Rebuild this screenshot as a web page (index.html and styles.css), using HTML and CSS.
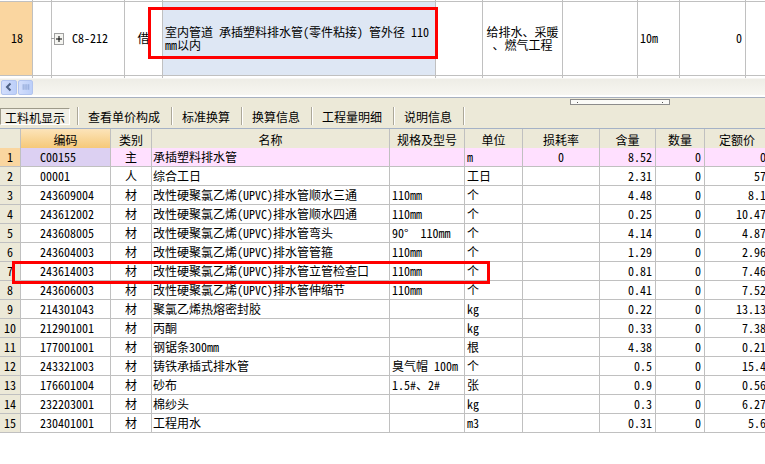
FILE: index.html
```html
<!DOCTYPE html>
<html lang="zh-CN">
<head>
<meta charset="utf-8">
<title>工料机显示</title>
<link rel="stylesheet" href="styles.css">
</head>
<body>
<div class="app">
  <div class="upper">
    <div class="trow">
      <div class="tcol c1"><div class="tcell num">18</div></div>
      <div class="tcol c2"><div class="tcell"></div></div>
      <div class="tcol c3"><div class="tcell code"><span class="tline"></span><svg class="plus" width="10" height="12" viewBox="0 0 10 12"><rect x="0.5" y="0.5" width="9" height="11" fill="#f4f4f0" stroke="#a0a0a0"/><path d="M2 6h6M5 3v6" stroke="#000" stroke-width="1"/></svg><span class="codetext">C8-212</span></div></div>
      <div class="tcol c4"><div class="tcell center">借</div></div>
      <div class="tcol c5"><div class="tcell desc">室内管道 承插塑料排水管(零件粘接) 管外径 110<br>mm以内</div></div>
      <div class="tcol c6"><div class="tcell"></div></div>
      <div class="tcol c7"><div class="tcell center">给排水、采暖<br>、燃气工程</div></div>
      <div class="tcol c8"><div class="tcell"></div></div>
      <div class="tcol c9"><div class="tcell left">10m</div></div>
      <div class="tcol c10"><div class="tcell right">0</div></div>
      <div class="tcol c11"><div class="tcell"></div></div>
    </div>
    <div class="hscroll">
      <div class="sbtn"><svg width="14" height="14" viewBox="0 0 14 14"><path d="M8.5 3.5L5 7l3.5 3.5" fill="none" stroke="#4d6185" stroke-width="2"/></svg></div>
      <div class="sthumb"><svg width="14" height="14" viewBox="0 0 14 14"><path d="M4.5 4v6M6.5 4v6M8.5 4v6M10.5 4v6" stroke="#8da3d4" stroke-width="1"/></svg></div>
    </div>
  </div>

  <div class="lower">
    <div class="griprow"><div class="grip"><span class="dot"></span><span class="dot"></span></div></div>
    <div class="tabs">
      <div class="tab active">工料机显示</div>
      <div class="sep"></div>
      <div class="tab">查看单价构成</div>
      <div class="sep"></div>
      <div class="tab">标准换算</div>
      <div class="sep"></div>
      <div class="tab">换算信息</div>
      <div class="sep"></div>
      <div class="tab">工程量明细</div>
      <div class="sep"></div>
      <div class="tab">说明信息</div>
      <div class="sep"></div>
    </div>
  </div>

  <div class="grid">
    <div class="h"></div><div class="h hsel">编码</div><div class="h">类别</div><div class="h">名称</div><div class="h">规格及型号</div><div class="h">单位</div><div class="h">损耗率</div><div class="h">含量</div><div class="h">数量</div><div class="h">定额价</div>

    <div class="d rn rnsel">1</div><div class="d code lav">C00155</div><div class="d mid pink">主</div><div class="d l pink">承插塑料排水管</div><div class="d l2 pink"></div><div class="d l2 pink">m</div><div class="d mid pink">0</div><div class="d r pink">8.52</div><div class="d r pink">0</div><div class="d r pink">0</div>

    <div class="d rn">2</div><div class="d code">00001</div><div class="d mid">人</div><div class="d l">综合工日</div><div class="d l2"></div><div class="d l2">工日</div><div class="d mid"></div><div class="d r">2.31</div><div class="d r">0</div><div class="d r">57</div>

    <div class="d rn">3</div><div class="d code">243609004</div><div class="d mid">材</div><div class="d l">改性硬聚氯乙烯(UPVC)排水管顺水三通</div><div class="d l2">110mm</div><div class="d l2">个</div><div class="d mid"></div><div class="d r">4.48</div><div class="d r">0</div><div class="d r">8.1</div>

    <div class="d rn">4</div><div class="d code">243612002</div><div class="d mid">材</div><div class="d l">改性硬聚氯乙烯(UPVC)排水管顺水四通</div><div class="d l2">110mm</div><div class="d l2">个</div><div class="d mid"></div><div class="d r">0.25</div><div class="d r">0</div><div class="d r">10.47</div>

    <div class="d rn">5</div><div class="d code">243608005</div><div class="d mid">材</div><div class="d l">改性硬聚氯乙烯(UPVC)排水管弯头</div><div class="d l2">90°&nbsp; 110mm</div><div class="d l2">个</div><div class="d mid"></div><div class="d r">4.14</div><div class="d r">0</div><div class="d r">4.87</div>

    <div class="d rn">6</div><div class="d code">243604003</div><div class="d mid">材</div><div class="d l">改性硬聚氯乙烯(UPVC)排水管管箍</div><div class="d l2">110mm</div><div class="d l2">个</div><div class="d mid"></div><div class="d r">1.29</div><div class="d r">0</div><div class="d r">2.96</div>

    <div class="d rn">7</div><div class="d code">243614003</div><div class="d mid">材</div><div class="d l">改性硬聚氯乙烯(UPVC)排水管立管检查口</div><div class="d l2">110mm</div><div class="d l2">个</div><div class="d mid"></div><div class="d r">0.81</div><div class="d r">0</div><div class="d r">7.46</div>

    <div class="d rn">8</div><div class="d code">243606003</div><div class="d mid">材</div><div class="d l">改性硬聚氯乙烯(UPVC)排水管伸缩节</div><div class="d l2">110mm</div><div class="d l2">个</div><div class="d mid"></div><div class="d r">0.41</div><div class="d r">0</div><div class="d r">7.52</div>

    <div class="d rn">9</div><div class="d code">214301043</div><div class="d mid">材</div><div class="d l">聚氯乙烯热熔密封胶</div><div class="d l2"></div><div class="d l2">kg</div><div class="d mid"></div><div class="d r">0.22</div><div class="d r">0</div><div class="d r">13.13</div>

    <div class="d rn">10</div><div class="d code">212901001</div><div class="d mid">材</div><div class="d l">丙酮</div><div class="d l2"></div><div class="d l2">kg</div><div class="d mid"></div><div class="d r">0.33</div><div class="d r">0</div><div class="d r">7.38</div>

    <div class="d rn">11</div><div class="d code">177001001</div><div class="d mid">材</div><div class="d l">钢锯条300mm</div><div class="d l2"></div><div class="d l2">根</div><div class="d mid"></div><div class="d r">4.38</div><div class="d r">0</div><div class="d r">0.21</div>

    <div class="d rn">12</div><div class="d code">243321003</div><div class="d mid">材</div><div class="d l">铸铁承插式排水管</div><div class="d l2">臭气帽 100m</div><div class="d l2">个</div><div class="d mid"></div><div class="d r">0.5</div><div class="d r">0</div><div class="d r">15.4</div>

    <div class="d rn">13</div><div class="d code">176601004</div><div class="d mid">材</div><div class="d l">砂布</div><div class="d l2">1.5#、2#</div><div class="d l2">张</div><div class="d mid"></div><div class="d r">0.9</div><div class="d r">0</div><div class="d r">0.56</div>

    <div class="d rn">14</div><div class="d code">232203001</div><div class="d mid">材</div><div class="d l">棉纱头</div><div class="d l2"></div><div class="d l2">kg</div><div class="d mid"></div><div class="d r">0.3</div><div class="d r">0</div><div class="d r">6.27</div>

    <div class="d rn">15</div><div class="d code">230401001</div><div class="d mid">材</div><div class="d l">工程用水</div><div class="d l2"></div><div class="d l2">m3</div><div class="d mid"></div><div class="d r">0.31</div><div class="d r">0</div><div class="d r">5.6</div>
  </div>

  <div class="mark mark-top"></div>
  <div class="mark mark-row"></div>
</div>
</body>
</html>
```

FILE: styles.css
```css
* { box-sizing: border-box; }
html, body { margin: 0; padding: 0; }
body {
  width: 765px;
  height: 464px;
  overflow: hidden;
  background: #fff;
  font-family: "Noto Sans Mono CJK SC", "Noto Sans CJK SC", sans-serif;
  font-size: 12px;
  color: #000;
}
.app { position: relative; width: 765px; height: 464px; overflow: hidden; }

/* upper grid row */
.trow { display: flex; height: 78px; width: 800px; }
.tcol { flex: none; height: 78px; border-right: 1px solid #c0c0c0; }
.tcell {
  margin-top: 1px;
  height: 75px;
  border-top: 1px solid #c0c0c0;
  border-bottom: 1px solid #c0c0c0;
  display: flex;
  align-items: center;
  line-height: 12.5px;
  white-space: nowrap;
}
.c1 { width: 33px; }
.c2 { width: 19px; }
.c3 { width: 73px; }
.c4 { width: 38px; }
.c5 { width: 273px; }
.c6 { width: 47px; }
.c7 { width: 80px; }
.c8 { width: 75px; }
.c9 { width: 42px; }
.c10 { width: 66px; }
.c11 { width: 60px; }
.num { background: #fad6a0; justify-content: center; padding-left: 2px; }
.center { justify-content: center; text-align: center; }
.left { padding-left: 2px; }
.right { justify-content: flex-end; padding-right: 3px; }
.desc { background: #dee7f4; padding-left: 2px; }
.code .tline { width: 3px; height: 1px; background: #a0a0a0; margin-left: -1px; }
.code .plus { margin-left: 0; flex: none; }
.code .codetext { margin-left: 8px; }

/* horizontal scrollbar */
.hscroll {
  height: 17px;
  display: flex;
  align-items: center;
  padding-left: 1px;
  background: linear-gradient(#eeede6, #f7f6f1);
  border-top: 1px solid #f7f6f3;
}
.sbtn, .sthumb {
  width: 16px;
  height: 15px;
  border: 1px solid #b2c4ee;
  border-radius: 2px;
  background: linear-gradient(90deg, #d3defc, #bccff9);
  display: flex;
  align-items: center;
  justify-content: center;
}
.sthumb { width: 15px; margin-left: 1px; }

/* splitter + tabs */
.lower {
  margin-top: 2px;
  height: 31px;
  background: #ece9d8;
  border-top: 1px solid #a7b0c0;
  padding-top: 1px;
}
.griprow { height: 6px; padding-left: 570px; }
.grip {
  width: 100px;
  height: 6px;
  border: 1px solid #8c8c8c;
  background: #fbfbf8;
  position: relative;
  display: flex;
  justify-content: space-between;
  align-items: center;
  padding: 0 6px;
}
.grip .dot { width: 1px; height: 1px; background: #555; }
.tabs { display: flex; align-items: center; height: 18px; margin-top: 2px; }
.tab { padding: 0 11px 0 9px; line-height: 17px; height: 17px; white-space: nowrap; }
.tab.active {
  width: 70px;
  padding: 0;
  text-align: center;
  margin-right: 7px;
  border: 1px solid;
  border-color: #9d9a8a #ffffff #ffffff #9d9a8a;
  background: #f1efe5;
}
.sep { width: 2px; height: 18px; border-left: 1px solid #aca899; border-right: 1px solid #ffffff; }

/* main grid */
.grid {
  display: grid;
  grid-template-columns: 21px 90px 41px 238px 75px 58px 77px 56px 49px 65px;
  grid-auto-rows: 19px;
  width: 770px;
  border-top: 1px solid #a5b2c6;
}
.grid > div {
  border-right: 1px solid #c0c0c0;
  border-bottom: 1px solid #c0c0c0;
  display: flex;
  align-items: center;
  white-space: nowrap;
  overflow: hidden;
  line-height: 18px;
}
.grid .h {
  height: 22px;
  background: #ece9d8;
  justify-content: center;
}
.grid .hsel { background: linear-gradient(#fce4ba, #f5c672); }
.grid .rn { background: #ece9d8; justify-content: center; }
.grid .rnsel { background: #fad6a0; }
.grid .code { padding-left: 19px; }
.grid .mid { justify-content: center; }
.grid .l { padding-left: 1px; }
.grid .l2 { padding-left: 2px; }
.grid .r { justify-content: flex-end; padding-right: 3px; }
.grid .pink { background: #ffe0ff; }
.grid .lav { background: #dcd0f2; }

/* red highlight rectangles */
.mark { position: absolute; border: 3px solid #ff0000; pointer-events: none; }
.mark-top { left: 148px; top: 7px; width: 290px; height: 52px; }
.mark-row { left: 12px; top: 261px; width: 478px; height: 23px; }
```
